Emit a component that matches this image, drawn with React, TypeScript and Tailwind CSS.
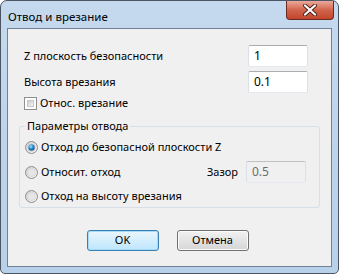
import React from "react";

const font = { fontFamily: '"Noto Sans", "Liberation Sans", sans-serif' };

const TextBox = ({ value, disabled }: { value: string; disabled?: boolean }) => (
  <div
    className={`w-[60px] h-[22px] flex items-center pl-[5px] text-[12px] rounded-[2px] border border-t-[#abadb3] border-x-[#dbdfe6] border-b-[#e3e9ef] ${
      disabled ? "bg-[#f0f0f0] text-[#6d6d6d] border-t-[#c0c0c0]" : "bg-white text-black"
    }`}
  >
    {value}
  </div>
);

const Radio = ({ checked }: { checked?: boolean }) => (
  <svg width="13" height="13" viewBox="0 0 13 13" className="shrink-0">
    <defs>
      <linearGradient id="rb" x1="0" y1="0" x2="1" y2="1">
        <stop offset="0" stopColor="#cfcfcf" />
        <stop offset="1" stopColor="#f6f6f6" />
      </linearGradient>
      <radialGradient id="dot" cx="0.4" cy="0.35" r="0.7">
        <stop offset="0" stopColor="#b9e4f7" />
        <stop offset="0.5" stopColor="#2a8ed0" />
        <stop offset="1" stopColor="#0f4d84" />
      </radialGradient>
    </defs>
    <circle cx="6.5" cy="6.5" r="6" fill="url(#rb)" stroke="#8f8f8f" />
    <circle cx="6.5" cy="6.5" r="4" fill="#e6e6e6" stroke="#d0d0d0" strokeWidth="0.6" />
    {checked && <circle cx="6.5" cy="6.5" r="3.2" fill="url(#dot)" />}
  </svg>
);

const Checkbox = () => (
  <div className="w-[13px] h-[13px] shrink-0 border border-[#8f8f8f] bg-white p-[2px]">
    <div className="w-full h-full border border-[#c8c8c8] bg-gradient-to-br from-[#cbcbcb] to-[#f6f6f6]" />
  </div>
);

export default function App() {
  return (
    <div
      style={font}
      className="w-[339px] h-[274px] rounded-t-[7px] rounded-b-[5px] border border-[#4a5664] bg-gradient-to-b from-[#c5d9ee] via-[#bfd4eb] to-[#b8d0e9] flex flex-col text-black"
    >
      <div className="h-[27px] flex items-start justify-between pl-[7px] pr-[4px]">
        <span className="mt-[7px] text-[11.5px] leading-[17px]">Отвод и врезание</span>
        <div className="w-[48px] h-[19px] rounded-b-[4px] border border-t-0 border-[#6b2a1f] bg-gradient-to-b from-[#e9a99b] via-[#d2634c] to-[#c1452b] flex items-center justify-center">
          <svg width="16" height="12" viewBox="0 0 16 12">
            <path d="M3 1.5 L13 10.5 M13 1.5 L3 10.5" stroke="#4a2018" strokeWidth="4" strokeLinecap="round" />
            <path d="M3 1.5 L13 10.5 M13 1.5 L3 10.5" stroke="#ffffff" strokeWidth="2.2" strokeLinecap="round" />
          </svg>
        </div>
      </div>
      <div className="ml-[6px] w-[325px] h-[239px] border border-[#6f8298] bg-[#f0f0f0] text-[11px] flex flex-col">
        <div className="mt-[16px] pl-[16px] pr-[23px] flex items-center justify-between h-[22px]">
          <span>Z плоскость безопасности</span>
          <TextBox value="1" />
        </div>
        <div className="mt-[4px] pl-[16px] pr-[23px] flex items-center justify-between h-[22px]">
          <span>Высота врезания</span>
          <TextBox value="0.1" />
        </div>
        <div className="mt-[4px] pl-[16px] flex items-center gap-[3px] h-[13px]">
          <Checkbox />
          <span>Относ. врезание</span>
        </div>
        <div className="mt-[16px] ml-[11px] w-[301px] h-[82px] rounded-[3px] border border-[#d5dfe5] relative flex flex-col pl-[5px] pr-[13px]">
          <span className="absolute -top-[9px] left-[5px] px-[2px] bg-[#f0f0f0] leading-[16px]">Параметры отвода</span>
          <div className="mt-[14px] flex items-center gap-[3px] h-[13px]">
            <Radio checked />
            <span>Отход до безопасной плоскости Z</span>
          </div>
          <div className="mt-[7px] flex items-center h-[22px]">
            <Radio />
            <span className="ml-[3px]">Относит. отход</span>
            <span className="ml-auto mr-[8px]">Зазор</span>
            <TextBox value="0.5" disabled />
          </div>
          <div className="mt-[7px] flex items-center gap-[3px] h-[13px]">
            <Radio />
            <span>Отход на высоту врезания</span>
          </div>
        </div>
        <div className="mt-[22px] flex justify-center gap-[18px] pr-[4px]">
          <button className="w-[72px] h-[21px] rounded-[3px] border border-[#3c7fb1] bg-gradient-to-b from-[#eaf6fd] to-[#bee6fd] text-[11px] shadow-[inset_0_0_0_1px_#a6dcf7]">
            OK
          </button>
          <button className="w-[72px] h-[21px] rounded-[3px] border border-[#707070] bg-gradient-to-b from-[#f2f2f2] to-[#d5d5d5] text-[11px] shadow-[inset_0_0_0_1px_#fbfbfb]">
            Отмена
          </button>
        </div>
      </div>
    </div>
  );
}
